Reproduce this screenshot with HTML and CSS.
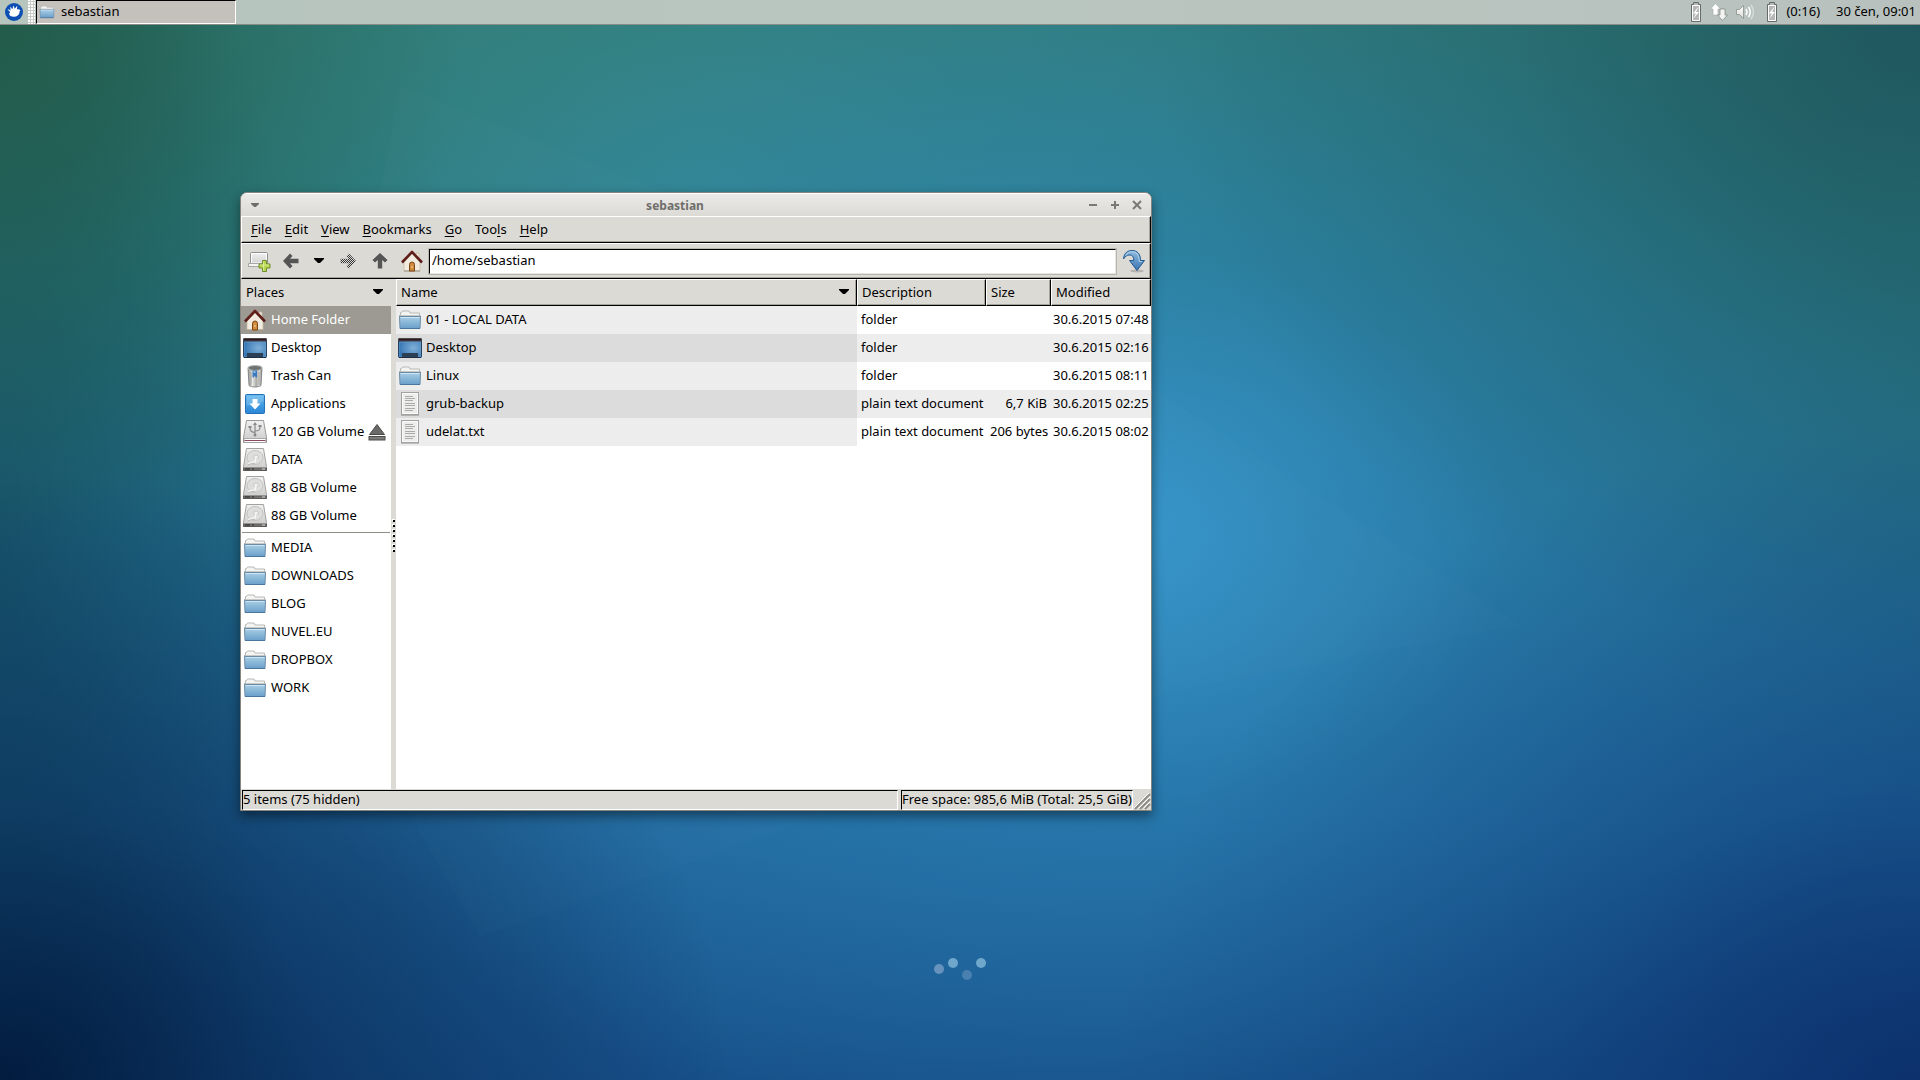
FILE: index.html
```html
<!DOCTYPE html>
<html lang="en">
<head>
<meta charset="utf-8">
<title>sebastian</title>
<link rel="stylesheet" href="styles.css">
</head>
<body>
<svg class="defs" aria-hidden="true">
  <defs>
    <linearGradient id="g-folder" x1="0" y1="0" x2="0" y2="1"><stop offset="0" stop-color="#a9cfe6"/><stop offset="1" stop-color="#6a9fca"/></linearGradient>
    <linearGradient id="g-metal" x1="0" y1="0" x2="0" y2="1"><stop offset="0" stop-color="#f1f1f1"/><stop offset="1" stop-color="#c9c9c9"/></linearGradient>
    <linearGradient id="g-can" x1="0" y1="0" x2="1" y2="0"><stop offset="0" stop-color="#8a8a88"/><stop offset=".3" stop-color="#eeeeec"/><stop offset=".6" stop-color="#a9a9a7"/><stop offset=".8" stop-color="#e2e2e0"/><stop offset="1" stop-color="#7d7d7b"/></linearGradient>
    <linearGradient id="g-app" x1="0" y1="0" x2="0" y2="1"><stop offset="0" stop-color="#5db5ec"/><stop offset="1" stop-color="#2b86d6"/></linearGradient>
    <radialGradient id="g-screen" cx=".65" cy=".5" r=".7"><stop offset="0" stop-color="#7fb0d8"/><stop offset="1" stop-color="#2f70b0"/></radialGradient>
    <linearGradient id="g-jump" x1="0" y1="0" x2="0" y2="1"><stop offset="0" stop-color="#8fbce0"/><stop offset="1" stop-color="#3a74b0"/></linearGradient>
    <linearGradient id="g-tray" x1="0" y1="0" x2="0" y2="1"><stop offset="0" stop-color="#ffffff"/><stop offset="1" stop-color="#dcdcda"/></linearGradient>
    <pattern id="p-check" width="2" height="2" patternUnits="userSpaceOnUse"><rect width="1" height="1" fill="#333"/><rect x="1" y="1" width="1" height="1" fill="#333"/></pattern>
  </defs>
  <symbol id="i-folder" viewBox="0 0 24 24">
    <path d="M2.500 9V4.500h1l1-1.500h6.500l1 2h9.500V9z" fill="#f4f4f3" stroke="#b8b8b5"/>
    <rect x="1.500" y="7.500" width="21" height="2" fill="#fff" stroke="#a3a7a8" stroke-width=".6"/>
    <path d="M1.500 8.500h21l-.5 12H2z" fill="url(#g-folder)" stroke="#6b8ca6"/>
    <path d="M2.500 9.500h19" stroke="#cfe4f1"/>
    <path d="M2 20.500h20" stroke="#4c769b"/>
  </symbol>
  <symbol id="i-home" viewBox="0 0 24 24">
    <path d="M16 4h3v7h-3z" fill="#efe9dc" stroke="#c5b8a2" stroke-width=".8"/>
    <path d="M4 12l8-8.500 8 8.500v10H4z" fill="#f1ecdf" stroke="#c8bda8" stroke-width=".8"/>
    <path d="M4 22h16" stroke="#9b907f"/>
    <path d="M9.500 22v-6.500a2.500 2.500 0 0 1 5 0V22z" fill="#cf8a3c" stroke="#7b4515"/>
    <path d="M11 18h2" stroke="#f5d9a0"/>
    <path d="M2 13.500L12 3l10 10.500" fill="none" stroke="#571c17" stroke-width="2.600" stroke-linejoin="round"/>
    <path d="M3.500 11L12 2.200l8.500 8.800" fill="none" stroke="#7e2a22" stroke-width=".8"/>
  </symbol>
  <symbol id="i-desktop" viewBox="0 0 24 24">
    <rect x=".5" y="2.500" width="23" height="19" rx="1" fill="url(#g-screen)" stroke="#27405e"/>
    <path d="M.5 5V3.500a1 1 0 0 1 1-1h21a1 1 0 0 1 1 1V5z" fill="#281c22" stroke="#4f464b"/>
    <rect x="1.500" y="6.500" width="21" height="14" fill="none" stroke="#6fa3d2" stroke-opacity=".4"/>
    <path d="M4 21v-4h16v4z" fill="#2b3f55"/>
    <path d="M1 21.500h22" stroke="#1c2f45"/>
  </symbol>
  <symbol id="i-trash" viewBox="0 0 24 24">
    <path d="M5 4.500l1 17c2.500 2 9.500 2 12 0l1-17z" fill="url(#g-can)" stroke="#777775" stroke-width=".8"/>
    <ellipse cx="12" cy="4" rx="7" ry="2.500" fill="#6d7274" stroke="#b3b3b1" stroke-width="1.200"/>
    <path d="M9.500 6.500h4.500v7h-1.200l-1-2-1 2H9.500z" fill="#3978bd"/>
    <path d="M10.500 7h2v2h-2z" fill="#90bce6"/>
    <path d="M8 8v13M16 8v13" stroke="#777" stroke-opacity=".6"/>
  </symbol>
  <symbol id="i-apps" viewBox="0 0 24 24">
    <rect x="2.500" y="2.500" width="19" height="19" rx="1" fill="url(#g-app)" stroke="#2370b8"/>
    <path d="M3.500 3.500h17v6q-8 4-17 4z" fill="#fff" fill-opacity=".18"/>
    <path d="M9.500 7h5v4.500h3L12 17.500l-5.500-6h3z" fill="#fff"/>
  </symbol>
  <symbol id="i-usb" viewBox="0 0 24 24">
    <path d="M3.500.5h17l3 17v5h-23v-5z" fill="url(#g-metal)" stroke="#999997"/>
    <path d="M1 18.500h22v4H1z" fill="#fff" stroke="#8e8e8c" stroke-width=".7"/>
    <path d="M1.500 20.500h21" stroke="#6a1c3a" stroke-width=".8"/>
    <path d="M12 4v10M12 12.500c-4 0-5-2-5-5M12 11c4 0 5-1 5-4" fill="none" stroke="#8a8a8a" stroke-width="1.200"/>
    <path d="M12 2l2 3h-4zM5.500 6h3v2h-3zM15.500 5h3v2h-3z" fill="#888"/>
    <circle cx="12" cy="15" r="1.500" fill="#888"/>
  </symbol>
  <symbol id="i-disk" viewBox="0 0 24 24">
    <path d="M3.500.5h17l3 18v4h-23v-4z" fill="url(#g-metal)" stroke="#a2a2a0"/>
    <path d="M.5 20h23v2.500H.5z" fill="#777573" stroke="#5b5957"/>
    <path d="M2 21h5M9 21h2" stroke="#2d2b2a"/>
    <path d="M19 21h3" stroke="#d8d8d6"/>
    <ellipse cx="12" cy="9.500" rx="8" ry="7" fill="#dededc" stroke="#c3c3c1"/>
    <ellipse cx="13" cy="9" rx="2.500" ry="2" fill="#f0f0ef" stroke="#c0c0be" stroke-width=".8"/>
    <path d="M5 15.500l7-1.500 1-4" fill="none" stroke="#f9f9f9" stroke-width="1.500"/>
    <path d="M5 16.500l7-1.500" fill="none" stroke="#aeaeac" stroke-width=".8"/>
  </symbol>
  <symbol id="i-text" viewBox="0 0 24 24">
    <rect x="3.500" y=".5" width="17" height="22" fill="#ededec" stroke="#a2a2a0"/>
    <rect x="4.500" y="1.500" width="15" height="20" fill="none" stroke="#fafafa"/>
    <path d="M7 4.500h8M7 6.500h10M7 8.500h8M7 11.500h10M7 13.500h10M7 16.500h10M7 18.500h8" stroke="#ababab"/>
    <path d="M3 23.500h18" stroke="#000" stroke-opacity=".2"/>
  </symbol>
  <symbol id="i-eject" viewBox="0 0 18 18">
    <path d="M9 1.500l7.500 10h-15z" fill="#6a6a68" stroke="#4b4b49"/>
    <rect x="1" y="13.500" width="16" height="3.500" fill="#7d7d7b" stroke="#4b4b49"/>
  </symbol>
  <symbol id="i-newtab" viewBox="0 0 24 24">
    <path d="M3.500 4.500a1 1 0 0 1 1-1h15a1 1 0 0 1 1 1v10l1 3h-20l2-3z" fill="url(#g-metal)" stroke="#8f8f8d"/>
    <path d="M4.500 14V4.500h15V14z" fill="none" stroke="#fff"/>
    <path d="M1.500 14.500h20v3h-20z" fill="#f4f4f3" stroke="#a6a6a4"/>
    <path d="M15.500 11.500h4v3.500H23v4h-3.500v3.500h-4V19H12v-4h3.500z" fill="#b6d64e" stroke="#6e8c2c"/>
    <path d="M16.500 12.500v9M13 16h9" stroke="#e1f0a4" stroke-opacity=".8"/>
  </symbol>
  <symbol id="i-back" viewBox="0 0 16 16"><path d="M0 8l7-7.500 2.500 2.500L7 5.800h8.500v4.400H7L9.500 13 7 15.500z" fill="#555"/></symbol>
  <symbol id="i-forward" viewBox="0 0 16 16"><path d="M16 8L9 .5 6.500 3 9 5.800H.5v4.400H9L6.500 13 9 15.500z" fill="url(#p-check)"/></symbol>
  <symbol id="i-up" viewBox="0 0 16 16"><path d="M8 0l7.500 7L13 9.500 10.200 7v8.500H5.800V7L3 9.500.5 7z" fill="#555"/></symbol>
  <symbol id="i-tri" viewBox="0 0 10 6"><path d="M0 0h10v1L6 5H4L0 1z" fill="currentColor"/></symbol>
  <symbol id="i-jump" viewBox="0 0 24 24">
    <ellipse cx="15" cy="22" rx="7" ry="1.500" fill="#000" fill-opacity=".18"/>
    <path d="M1.500 10C2 4 5.500 1.500 10 1.500c5.500 0 8.500 3.500 8.500 10h4L15 21.500 7.500 11.500h4.300C11.800 8 10.500 6 7.500 6 5 6 3 7.500 1.500 10z" fill="url(#g-jump)" stroke="#245a92" stroke-linejoin="round"/>
    <path d="M4 6.500C6 3 8 2.700 10 2.700c4.500 0 7 3.300 7.300 9.800h2.500" fill="none" stroke="#c3dcf0" stroke-opacity=".8"/>
  </symbol>
  <symbol id="i-mouse" viewBox="0 0 20 20">
    <circle cx="10" cy="10" r="9" fill="#0b4fb3"/>
    <path d="M3.500 7.500L5 7.500l1.500 1.200L6.300 4.500l2 2.700L9.500 3.500l1.300 3.300 2.400-3-.2 3.700c1.500-.7 2.500-.3 3.500 1-.8.200-1 .8-1 2-.5 2.500-2.500 4.200-5.500 4.200-3 0-4.800-1-4.800-3.200l1-1.500z" fill="#fff"/>
  </symbol>
  <symbol id="i-battery" viewBox="0 0 12 20">
    <path d="M3.500 2.500v-2h5v2h2v17h-9v-17z" fill="#b4b7b5" stroke="#666b68"/>
    <path d="M2.500 3.500h7v15h-7z" fill="none" stroke="#fff"/>
    <path d="M9 4L3 11.500h3L3 17l6-7H6z" fill="#fff"/>
  </symbol>
  <symbol id="i-network" viewBox="0 0 18 18">
    <path d="M5.500.5L10.500 6H8v6H3V6H.5z" fill="#fff" stroke="#a3aaa6" stroke-width=".6"/>
    <path d="M12.500 17.500L7.500 12H10V6h5v6h2.500z" fill="#f3f3f2" stroke="#7b827e" stroke-width=".7"/>
  </symbol>
  <symbol id="i-sound" viewBox="0 0 18 18">
    <path d="M.5 6.500h3l4-4v13l-4-4h-3z" fill="url(#g-tray)" stroke="#7f8783" stroke-width=".7"/>
    <path d="M10 6q2 3 0 6M12.500 4q3.500 5 0 10" fill="none" stroke="#fff" stroke-width="1.500"/>
    <path d="M15 2q5 7 0 14" fill="none" stroke="#d5dcd8" stroke-width="1.500"/>
  </symbol>
</svg>

<header class="panel">
  <button class="panel-menu" aria-label="Applications menu"><svg class="icon20"><use href="#i-mouse"/></svg></button>
  <span class="panel-handle"></span>
  <button class="task"><svg class="icon16"><use href="#i-folder"/></svg>sebastian</button>
  <div class="tray">
    <svg class="battery"><use href="#i-battery"/></svg>
    <svg class="icon18"><use href="#i-network"/></svg>
    <svg class="icon18"><use href="#i-sound"/></svg>
    <svg class="battery battery-timed"><use href="#i-battery"/></svg>
    <span>(0:16)</span>
    <time class="clock">30 čen, 09:01</time>
  </div>
</header>

<main class="desktop">
  <svg class="wallpaper" viewBox="0 0 1920 1055" preserveAspectRatio="none" aria-hidden="true">
    <polygon points="400,60 1160,368 1520,600 1170,667 480,912 300,600" fill="#fff" fill-opacity=".012"/>
  </svg>

  <section class="window" aria-label="sebastian">
    <div class="titlebar">
      <button class="title-menu" aria-label="Window menu"><svg class="tri-small"><use href="#i-tri"/></svg></button>
      <h1 class="title">sebastian</h1>
      <div class="controls">
        <button aria-label="Minimize"><svg viewBox="0 0 10 10"><path d="M1 5h8" stroke-width="2"/></svg></button>
        <button aria-label="Maximize"><svg viewBox="0 0 10 10"><path d="M1 5h8M5 1v8" stroke-width="2"/></svg></button>
        <button aria-label="Close"><svg viewBox="0 0 10 10"><path d="M1 1l8 8M9 1L1 9" stroke-width="2"/></svg></button>
      </div>
    </div>
    <nav class="menubar">
      <button><u>F</u>ile</button><button><u>E</u>dit</button><button><u>V</u>iew</button><button><u>B</u>ookmarks</button><button><u>G</u>o</button><button>Too<u>l</u>s</button><button><u>H</u>elp</button>
    </nav>
    <div class="toolbar">
      <button class="tool-wide" aria-label="New tab"><svg class="icon24"><use href="#i-newtab"/></svg></button>
      <button class="tool-mid" aria-label="Back"><svg class="icon16"><use href="#i-back"/></svg></button>
      <button class="tool-drop" aria-label="History"><svg class="tri"><use href="#i-tri"/></svg></button>
      <button class="tool" aria-label="Forward" disabled><svg class="icon16"><use href="#i-forward"/></svg></button>
      <button class="tool" aria-label="Up"><svg class="icon16"><use href="#i-up"/></svg></button>
      <button class="tool" aria-label="Home"><svg class="icon24"><use href="#i-home"/></svg></button>
      <input class="path" type="text" aria-label="Location" value="/home/sebastian">
      <button class="tool-go" aria-label="Go"><svg class="icon24"><use href="#i-jump"/></svg></button>
    </div>
    <div class="body">
      <aside class="sidebar">
        <button class="places-head">Places<svg class="tri"><use href="#i-tri"/></svg></button>
        <ul class="places">
          <li><a href="#" class="selected"><svg class="icon24"><use href="#i-home"/></svg>Home Folder</a></li>
          <li><a href="#"><svg class="icon24"><use href="#i-desktop"/></svg>Desktop</a></li>
          <li><a href="#"><svg class="icon24"><use href="#i-trash"/></svg>Trash Can</a></li>
          <li><a href="#"><svg class="icon24"><use href="#i-apps"/></svg>Applications</a></li>
          <li class="ejectable"><a href="#"><svg class="icon24"><use href="#i-usb"/></svg>120 GB Volume</a><button class="eject" aria-label="Eject"><svg class="icon18"><use href="#i-eject"/></svg></button></li>
          <li><a href="#"><svg class="icon24"><use href="#i-disk"/></svg>DATA</a></li>
          <li><a href="#"><svg class="icon24"><use href="#i-disk"/></svg>88 GB Volume</a></li>
          <li><a href="#"><svg class="icon24"><use href="#i-disk"/></svg>88 GB Volume</a></li>
        </ul>
        <hr class="divider">
        <ul class="places">
          <li><a href="#"><svg class="icon24"><use href="#i-folder"/></svg>MEDIA</a></li>
          <li><a href="#"><svg class="icon24"><use href="#i-folder"/></svg>DOWNLOADS</a></li>
          <li><a href="#"><svg class="icon24"><use href="#i-folder"/></svg>BLOG</a></li>
          <li><a href="#"><svg class="icon24"><use href="#i-folder"/></svg>NUVEL.EU</a></li>
          <li><a href="#"><svg class="icon24"><use href="#i-folder"/></svg>DROPBOX</a></li>
          <li><a href="#"><svg class="icon24"><use href="#i-folder"/></svg>WORK</a></li>
        </ul>
      </aside>
      <div class="splitter"><span class="splitter-grip"></span></div>
      <div class="files">
        <table>
          <colgroup><col><col class="col-desc"><col class="col-size"><col class="col-date"></colgroup>
          <thead>
            <tr>
              <th scope="col"><div class="head sorted">Name<svg class="tri"><use href="#i-tri"/></svg></div></th>
              <th scope="col"><div class="head">Description</div></th>
              <th scope="col"><div class="head">Size</div></th>
              <th scope="col"><div class="head">Modified</div></th>
            </tr>
          </thead>
          <tbody>
            <tr><td><div class="name"><svg class="icon24"><use href="#i-folder"/></svg>01 - LOCAL DATA</div></td><td>folder</td><td></td><td>30.6.2015 07:48</td></tr>
            <tr><td><div class="name"><svg class="icon24"><use href="#i-desktop"/></svg>Desktop</div></td><td>folder</td><td></td><td>30.6.2015 02:16</td></tr>
            <tr><td><div class="name"><svg class="icon24"><use href="#i-folder"/></svg>Linux</div></td><td>folder</td><td></td><td>30.6.2015 08:11</td></tr>
            <tr><td><div class="name"><svg class="icon24"><use href="#i-text"/></svg>grub-backup</div></td><td>plain text document</td><td>6,7 KiB</td><td>30.6.2015 02:25</td></tr>
            <tr><td><div class="name"><svg class="icon24"><use href="#i-text"/></svg>udelat.txt</div></td><td>plain text document</td><td>206 bytes</td><td>30.6.2015 08:02</td></tr>
          </tbody>
        </table>
      </div>
    </div>
    <footer class="statusbar">
      <span class="status status-items">5 items (75 hidden)</span>
      <span class="status">Free space: 985,6 MiB (Total: 25,5 GiB)</span>
      <svg class="grip" viewBox="0 0 17 20" aria-hidden="true">
        <path d="M1 19L16 4M6 19L16 9M11 19l5-5" stroke="#8e8d86" stroke-width="2"/>
        <path d="M0 18L15 3M5 18L16 7M10 18l6-6" stroke="#fff"/>
      </svg>
    </footer>
  </section>

  <div class="spinner" aria-hidden="true">
    <i class="dot dot-1"></i><i class="dot dot-2"></i><i class="dot dot-3"></i><i class="dot dot-4"></i>
  </div>
</main>
</body>
</html>
```

FILE: styles.css
```css
* { box-sizing: border-box; }

html, body { height: 100%; }

body {
  margin: 0;
  display: flex;
  flex-direction: column;
  overflow: hidden;
  font: 13px/18px "Noto Sans", "Open Sans", sans-serif;
  color: #000;
  background: #1f6a90;
}

button, input {
  font: inherit;
  color: inherit;
  background: none;
  border: 0;
  padding: 0;
  margin: 0;
}

svg { display: block; flex: none; }
.defs { position: absolute; width: 0; height: 0; }
.icon24 { width: 24px; height: 24px; }
.icon20 { width: 20px; height: 20px; }
.icon18 { width: 18px; height: 18px; }
.icon16 { width: 16px; height: 16px; }
.tri { width: 10px; height: 6px; }
.tri-small { width: 8px; height: 5px; }

/* Top panel */
.panel {
  flex: none;
  display: flex;
  align-items: center;
  height: 25px;
  background: linear-gradient(90deg, #b6c5be, #b9c5bf 50%, #b8c1be);
  border-bottom: 1px solid #878c86;
}
.panel-menu { width: 28px; padding-left: 4px; }
.panel-handle {
  align-self: stretch;
  width: 7px;
  background:
    radial-gradient(circle at 1px 1px, #fff 1px, transparent 1px) 0 2px / 3px 3px,
    #c9cbc5;
}
.task {
  display: flex;
  align-items: center;
  gap: 6px;
  width: 200px;
  height: 24px;
  margin-left: 1px;
  padding: 0 2px 2px;
  background: #c4c1bd;
  border: 1px solid;
  border-color: #000 #fff #fff #000;
}
.task svg { margin-top: 2px; }
.tray {
  display: flex;
  align-items: center;
  gap: 8px;
  margin-left: auto;
  padding: 0 4px 2px 0;
}
.tray svg { margin-top: 2px; }
.battery { width: 12px; height: 20px; }
.battery-timed { margin-left: 4px; }
.clock { margin-left: 8px; }

/* Desktop and wallpaper */
.desktop {
  flex: 1;
  position: relative;
  background:
    radial-gradient(38% 58% at 0% 100%, rgba(0, 22, 56, .9), rgba(0, 24, 60, .42) 45%, rgba(0, 26, 64, 0)),
    radial-gradient(42% 62% at 100% 100%, rgba(8, 38, 98, .75), rgba(8, 44, 106, .34) 45%, rgba(8, 48, 112, 0)),
    radial-gradient(40% 60% at 100% 0%, rgba(26, 76, 86, .75), rgba(26, 76, 86, .25) 55%, rgba(26, 76, 86, 0)),
    radial-gradient(24% 50% at 0% 0%, rgba(34, 88, 66, .85), rgba(34, 92, 72, .4) 50%, rgba(34, 96, 80, 0)),
    radial-gradient(16% 80% at 0% 50%, rgba(14, 66, 84, .55), rgba(14, 66, 84, 0)),
    radial-gradient(46% 60% at 58% 48%, rgba(56, 152, 208, .95), rgba(46, 136, 188, .5) 45%, rgba(40, 128, 180, 0)),
    radial-gradient(32% 40% at 36% 16%, rgba(62, 146, 150, .5), rgba(62, 146, 150, 0)),
    linear-gradient(180deg, #2f7a76 0%, #29787f 20%, #226b8c 50%, #1f6499 75%, #17508a 100%);
}
.wallpaper { position: absolute; inset: 0; width: 100%; height: 100%; }

/* File manager window */
.window {
  position: absolute;
  left: 240px;
  top: 167px;
  width: 912px;
  height: 619px;
  display: flex;
  flex-direction: column;
  background: #dcdad5;
  border: 1px solid #85847f;
  border-radius: 7px 7px 0 0;
  overflow: hidden;
  box-shadow: 0 5px 12px rgba(0, 0, 0, .45);
}
.titlebar {
  flex: none;
  display: flex;
  align-items: center;
  height: 23px;
  border-top: 1px solid #fff;
  background: linear-gradient(#ebeae8, #dcdad5);
  color: #6f6e6b;
}
.title-menu { display: flex; justify-content: center; width: 28px; }
.title {
  flex: 1;
  margin: 0;
  padding: 2px 0 0 2px;
  text-align: center;
  font-size: 12px;
  font-weight: 700;
  line-height: 18px;
}
.controls { display: flex; width: 72px; padding-left: 3px; }
.controls button { display: flex; justify-content: center; width: 22px; }
.controls svg { width: 10px; height: 10px; stroke: #7a7975; }

.menubar {
  flex: none;
  display: flex;
  align-items: center;
  height: 27px;
  padding: 0 2px 2px;
  border: 1px solid;
  border-color: #fff #000 #000 #fff;
  box-shadow: inset -1px -1px #a5a39a;
}
.menubar button { padding: 0 7px 0 6px; }
.menubar button:first-child { padding-left: 7px; }
.menubar u { text-underline-offset: 2px; }

.toolbar {
  flex: none;
  display: flex;
  align-items: center;
  height: 36px;
  border: 1px solid;
  border-color: #fff #000 #000 #fff;
  box-shadow: inset -1px -1px #a5a39a;
}
.toolbar button { display: flex; justify-content: center; }
.tool-wide { width: 34px; }
.tool-mid { width: 30px; }
.tool-drop { width: 26px; }
.toolbar .tool { width: 32px; }
.path {
  flex: 1;
  height: 25px;
  margin: 0 2px 0 1px;
  padding: 0 2px 2px;
  background: #fff;
  border: 1px solid;
  border-color: #000 #e6e4e0 #e6e4e0 #000;
  outline: 1px solid #b9b7af;
}
.tool-go { width: 32px; }

.body { flex: 1; display: flex; min-height: 0; }
.sidebar { flex: none; width: 150px; background: #fff; }
.places-head {
  display: flex;
  align-items: center;
  justify-content: space-between;
  width: 100%;
  height: 27px;
  padding: 0 8px 2px 5px;
  background: #dcdad5;
}
.places { list-style: none; margin: 0; padding: 0; }
.places a {
  flex: 1;
  display: flex;
  align-items: center;
  gap: 4px;
  height: 28px;
  padding: 0 0 2px 2px;
  color: inherit;
  text-decoration: none;
  white-space: nowrap;
}
.places a svg, .name svg { margin-top: 2px; }
.places .selected { background: #9c9a92; color: #fff; }
.ejectable { display: flex; align-items: center; }
.eject { padding-right: 5px; }
.divider { margin: 2px 1px 1px; border: 0; border-top: 1px solid #8f8d86; }

.splitter {
  flex: none;
  display: flex;
  align-items: center;
  justify-content: flex-end;
  width: 5px;
  padding-right: 1px;
}
.splitter-grip {
  width: 3px;
  height: 34px;
  margin-top: 4px;
  background:
    repeating-linear-gradient(180deg, transparent 0 1px, #000 1px 3px, transparent 3px 5px) 1px 0 / 2px 100% no-repeat,
    repeating-linear-gradient(180deg, #fff 0 2px, #dcdad5 2px 5px);
}

.files { flex: 1; min-width: 0; background: #fff; }
table { width: 100%; border-collapse: collapse; table-layout: fixed; }
.col-desc { width: 129px; }
.col-size { width: 65px; }
.col-date { width: 100px; }
th, td { padding: 0; font-weight: 400; text-align: left; white-space: nowrap; }
.head {
  display: flex;
  align-items: center;
  justify-content: space-between;
  height: 27px;
  padding: 0 4px 2px;
  background: #dcdad5;
  border: 1px solid;
  border-color: #fff #000 #000 #fff;
  box-shadow: inset -1px -1px #a5a39a;
}
.sorted { padding-right: 7px; }
td { height: 28px; padding: 0 4px 2px; }
td:first-child { padding: 0 2px 2px; background: #ededed; }
td:nth-child(3) { text-align: right; }
td:last-child { padding: 0 2px 2px; }
tbody tr:nth-child(even) td { background: #ededed; }
tbody tr:nth-child(even) td:first-child { background: #dcdcdc; }
.name { display: flex; align-items: center; gap: 4px; }

.statusbar {
  flex: none;
  display: flex;
  align-items: center;
  height: 21px;
  padding-left: 1px;
  gap: 3px;
}
.status {
  height: 20px;
  padding-bottom: 2px;
  border: 1px solid;
  border-color: #000 #fff #fff #000;
  line-height: 16px;
  white-space: nowrap;
}
.status-items { flex: 1; }
.grip { width: 17px; height: 20px; margin-left: -2px; }

/* Loading dots painted on the desktop */
.spinner { position: absolute; left: 934px; top: 933px; }
.dot {
  position: absolute;
  width: 10px;
  height: 10px;
  border-radius: 50%;
}
.dot-1 { left: 0; top: 6px; background: #6792bd; }
.dot-2 { left: 14px; top: 0; background: #6fa6cc; }
.dot-3 { left: 28px; top: 12px; background: #4a80b0; }
.dot-4 { left: 42px; top: 0; background: #6fa6cc; }
```
